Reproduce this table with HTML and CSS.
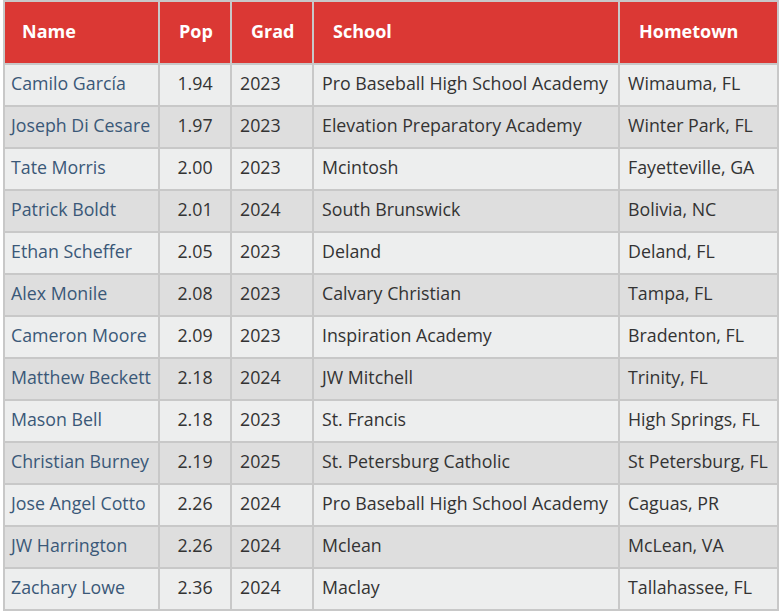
FILE: index.html
```html
<!DOCTYPE html>
<html>
<head>
<meta charset="utf-8">
<link rel="stylesheet" href="styles.css">
</head>
<body>
<table class="roster">
  <colgroup>
    <col class="c-name"><col class="c-pop"><col class="c-grad"><col class="c-school"><col class="c-home">
  </colgroup>
  <thead>
    <tr><th>Name</th><th>Pop</th><th>Grad</th><th>School</th><th>Hometown</th></tr>
  </thead>
  <tbody>
    <tr><td><a href="#">Camilo García</a></td><td class="pop">1.94</td><td>2023</td><td>Pro Baseball High School Academy</td><td>Wimauma, FL</td></tr>
    <tr><td><a href="#">Joseph Di Cesare</a></td><td class="pop">1.97</td><td>2023</td><td>Elevation Preparatory Academy</td><td>Winter Park, FL</td></tr>
    <tr><td><a href="#">Tate Morris</a></td><td class="pop">2.00</td><td>2023</td><td>Mcintosh</td><td>Fayetteville, GA</td></tr>
    <tr><td><a href="#">Patrick Boldt</a></td><td class="pop">2.01</td><td>2024</td><td>South Brunswick</td><td>Bolivia, NC</td></tr>
    <tr><td><a href="#">Ethan Scheffer</a></td><td class="pop">2.05</td><td>2023</td><td>Deland</td><td>Deland, FL</td></tr>
    <tr><td><a href="#">Alex Monile</a></td><td class="pop">2.08</td><td>2023</td><td>Calvary Christian</td><td>Tampa, FL</td></tr>
    <tr><td><a href="#">Cameron Moore</a></td><td class="pop">2.09</td><td>2023</td><td>Inspiration Academy</td><td>Bradenton, FL</td></tr>
    <tr><td><a href="#">Matthew Beckett</a></td><td class="pop">2.18</td><td>2024</td><td>JW Mitchell</td><td>Trinity, FL</td></tr>
    <tr><td><a href="#">Mason Bell</a></td><td class="pop">2.18</td><td>2023</td><td>St. Francis</td><td>High Springs, FL</td></tr>
    <tr><td><a href="#">Christian Burney</a></td><td class="pop">2.19</td><td>2025</td><td>St. Petersburg Catholic</td><td>St Petersburg, FL</td></tr>
    <tr><td><a href="#">Jose Angel Cotto</a></td><td class="pop">2.26</td><td>2024</td><td>Pro Baseball High School Academy</td><td>Caguas, PR</td></tr>
    <tr><td><a href="#">JW Harrington</a></td><td class="pop">2.26</td><td>2024</td><td>Mclean</td><td>McLean, VA</td></tr>
    <tr><td><a href="#">Zachary Lowe</a></td><td class="pop">2.36</td><td>2024</td><td>Maclay</td><td>Tallahassee, FL</td></tr>
  </tbody>
</table>
</body>
</html>
```

FILE: styles.css
```css
html, body {
  margin: 0;
  padding: 0;
  background: #ffffff;
}
body {
  padding: 0 3px;
  font-family: "Open Sans", "Liberation Sans", sans-serif;
  font-size: 17.8px;
  color: #333333;
}
.roster {
  border-collapse: collapse;
  table-layout: fixed;
  width: 774px;
}
.c-name { width: 155px; }
.c-pop { width: 72px; }
.c-grad { width: 82px; }
.c-school { width: 306px; }
.c-home { width: 159px; }
.roster th,
.roster td {
  border: 2px solid #c8c8c8;
  white-space: nowrap;
  overflow: hidden;
}
.roster th {
  background: #db3834;
  color: #ffffff;
  font-size: 18px;
  font-weight: 700;
  text-align: left;
  height: 63px;
  padding: 0 0 4px 19px;
  box-sizing: border-box;
  line-height: 1;
}
.roster th:first-child { padding-left: 17px; }
.roster td {
  height: 42px;
  padding: 0 0 2px 8px;
  box-sizing: border-box;
  line-height: 1;
}
.roster td:first-child { padding-left: 6px; }
.roster td.pop { text-align: center; padding-left: 0; }
.roster tbody tr:nth-child(odd) td { background: #edeeee; }
.roster tbody tr:nth-child(even) td { background: #dedede; }
.roster a {
  color: #3a5878;
  text-decoration: none;
}
```
